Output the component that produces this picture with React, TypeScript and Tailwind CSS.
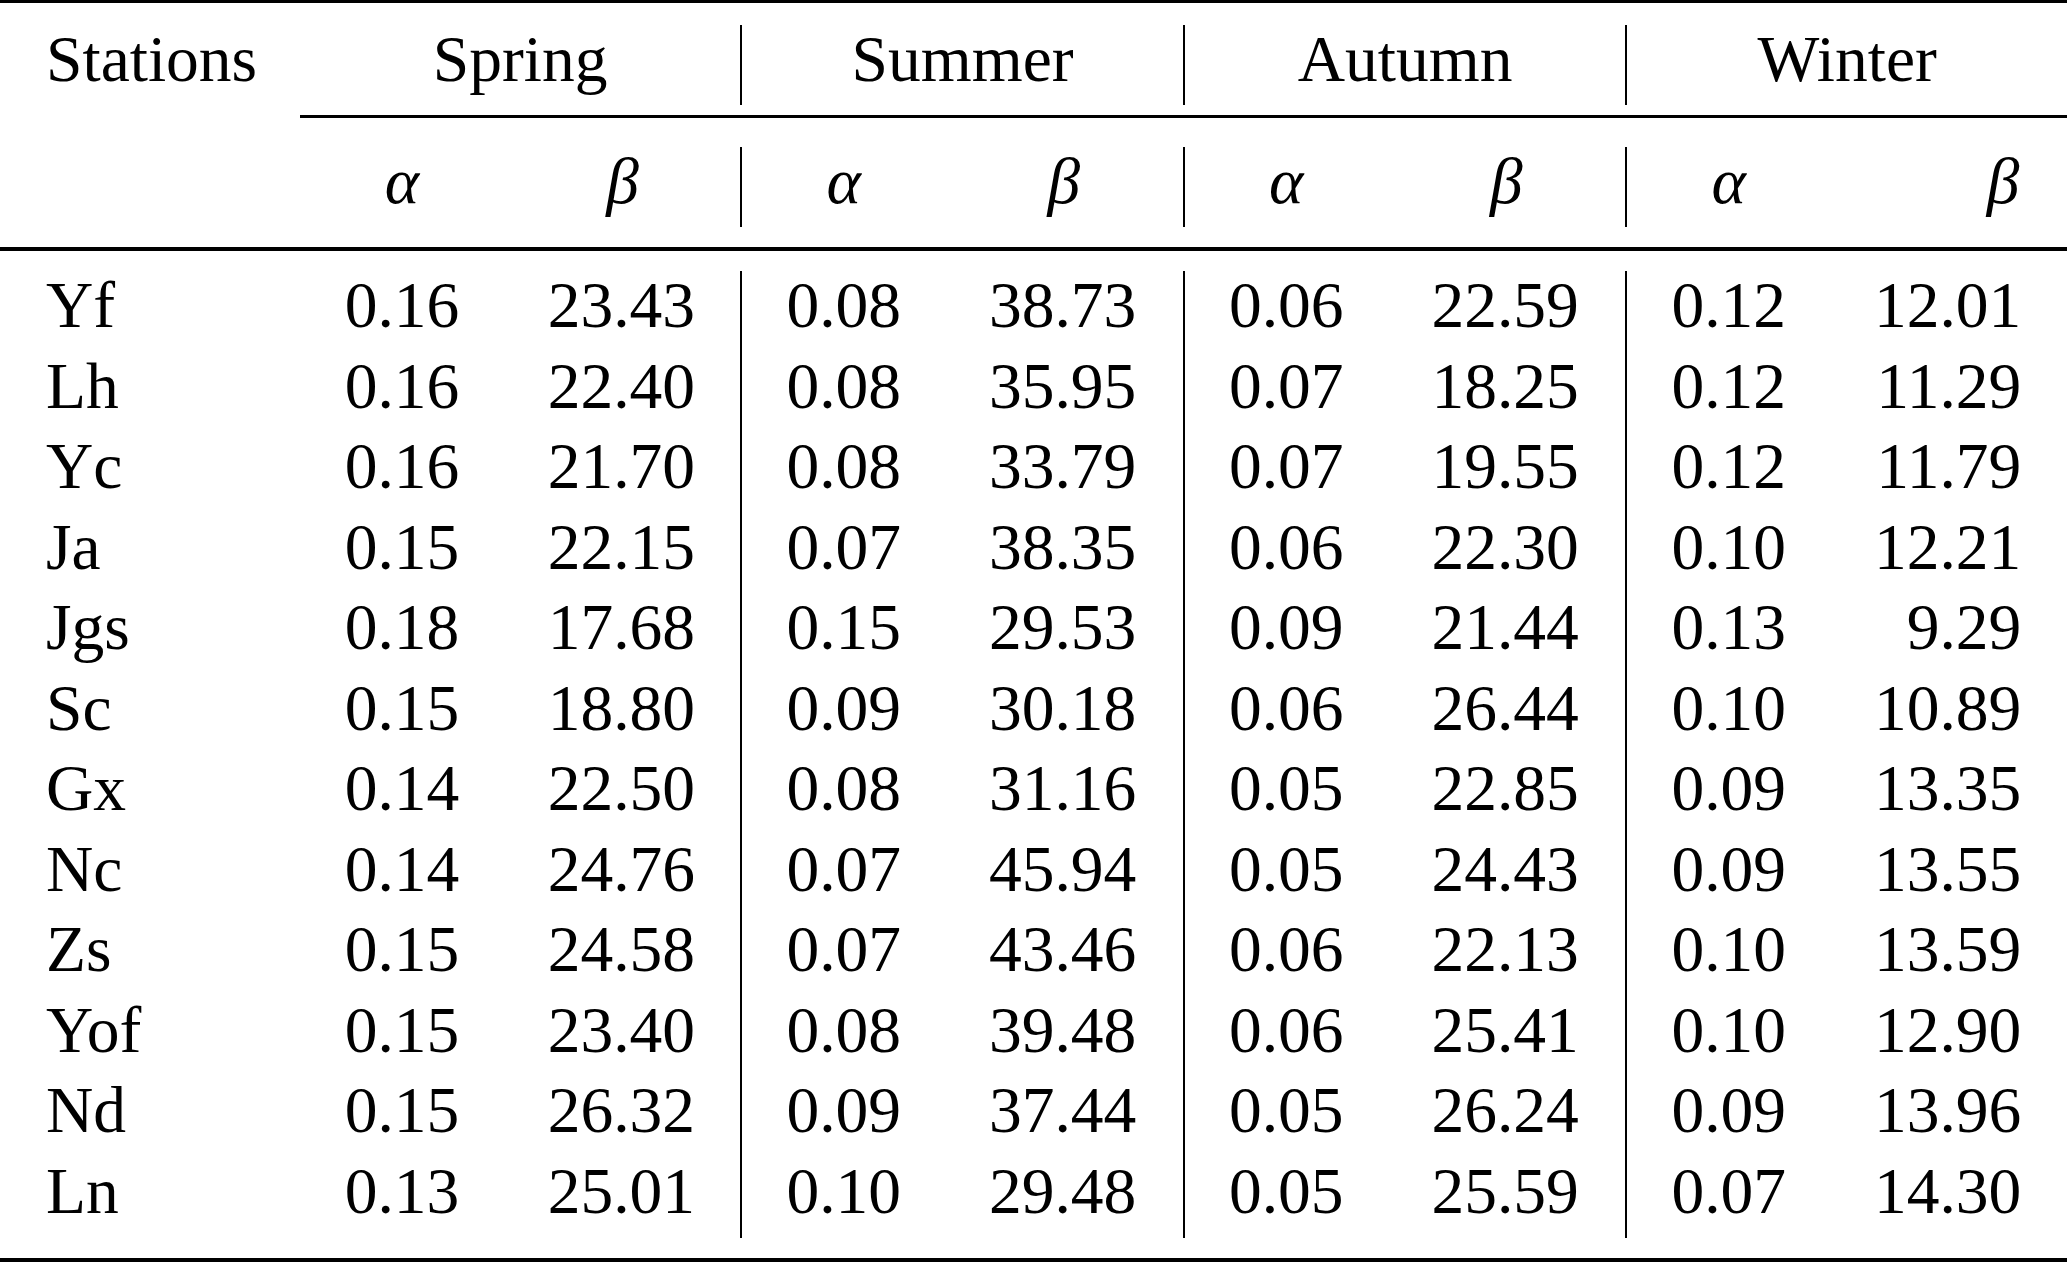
import clsx from 'clsx';

const seasons = ['Spring', 'Summer', 'Autumn', 'Winter'];

// station, then alpha/beta pairs for spring, summer, autumn, winter
const rows: [string, ...string[]][] = [
  ['Yf', '0.16', '23.43', '0.08', '38.73', '0.06', '22.59', '0.12', '12.01'],
  ['Lh', '0.16', '22.40', '0.08', '35.95', '0.07', '18.25', '0.12', '11.29'],
  ['Yc', '0.16', '21.70', '0.08', '33.79', '0.07', '19.55', '0.12', '11.79'],
  ['Ja', '0.15', '22.15', '0.07', '38.35', '0.06', '22.30', '0.10', '12.21'],
  ['Jgs', '0.18', '17.68', '0.15', '29.53', '0.09', '21.44', '0.13', '9.29'],
  ['Sc', '0.15', '18.80', '0.09', '30.18', '0.06', '26.44', '0.10', '10.89'],
  ['Gx', '0.14', '22.50', '0.08', '31.16', '0.05', '22.85', '0.09', '13.35'],
  ['Nc', '0.14', '24.76', '0.07', '45.94', '0.05', '24.43', '0.09', '13.55'],
  ['Zs', '0.15', '24.58', '0.07', '43.46', '0.06', '22.13', '0.10', '13.59'],
  ['Yof', '0.15', '23.40', '0.08', '39.48', '0.06', '25.41', '0.10', '12.90'],
  ['Nd', '0.15', '26.32', '0.09', '37.44', '0.05', '26.24', '0.09', '13.96'],
  ['Ln', '0.13', '25.01', '0.10', '29.48', '0.05', '25.59', '0.07', '14.30'],
];

// width + left rule of each season block
const blockClass = (i: number) =>
  clsx(
    'flex',
    i === 0 && 'w-[440.3px]',
    (i === 1 || i === 2) && 'w-[442.5px] border-l-[2.5px] border-black',
    i === 3 && 'flex-1 border-l-[2.5px] border-black',
  );

function SeasonCells({ i, a, b }: { i: number; a: string; b: string }) {
  return (
    <div className={blockClass(i)}>
      <div className={clsx('text-center', i === 0 ? 'w-[204px]' : 'w-[203px]')}>{a}</div>
      <div className="w-[191px] text-right">{b}</div>
    </div>
  );
}

export default function App() {
  return (
    <div className="h-[1262px] w-[2067px] overflow-hidden bg-white font-['Liberation_Serif',serif] text-[65.5px] leading-[68.5px] text-black">
      <div className="h-[3px] bg-black" />

      {/* season names */}
      <div className="mt-[21.6px] flex h-[80.5px]">
        <div className="w-[300px] pl-[46px]">Stations</div>
        {seasons.map((s, i) => (
          <div key={s} className={clsx(blockClass(i), 'justify-center')}>
            {s}
          </div>
        ))}
      </div>

      <div className="ml-[300px] mt-[9.5px] h-[3px] bg-black" />

      {/* alpha / beta */}
      <div className="mt-[29.2px] flex h-[80.5px] italic">
        <div className="w-[300px]" />
        {seasons.map((s, i) => (
          <div key={s} className={blockClass(i)}>
            <div className={clsx('text-center', i === 0 ? 'w-[204px]' : 'w-[203px]')}>α</div>
            <div className="flex w-[191px] justify-end">
              {i === 3 ? (
                <span className="pr-[2px]">β</span>
              ) : (
                <span className="inline-block w-[147px] pl-[2px] text-center">β</span>
              )}
            </div>
          </div>
        ))}
      </div>

      <div className="mt-[20px] h-[3.4px] bg-black" />

      <div className="mt-[20.3px]">
        {rows.map(([station, ...vals]) => (
          <div key={station} className="flex h-[80.55px]">
            <div className="w-[300px] pl-[46px]">{station}</div>
            {seasons.map((s, i) => (
              <SeasonCells key={s} i={i} a={vals[i * 2]} b={vals[i * 2 + 1]} />
            ))}
          </div>
        ))}
      </div>

      <div className="mt-[20.7px] h-[3.4px] bg-black" />
    </div>
  );
}
